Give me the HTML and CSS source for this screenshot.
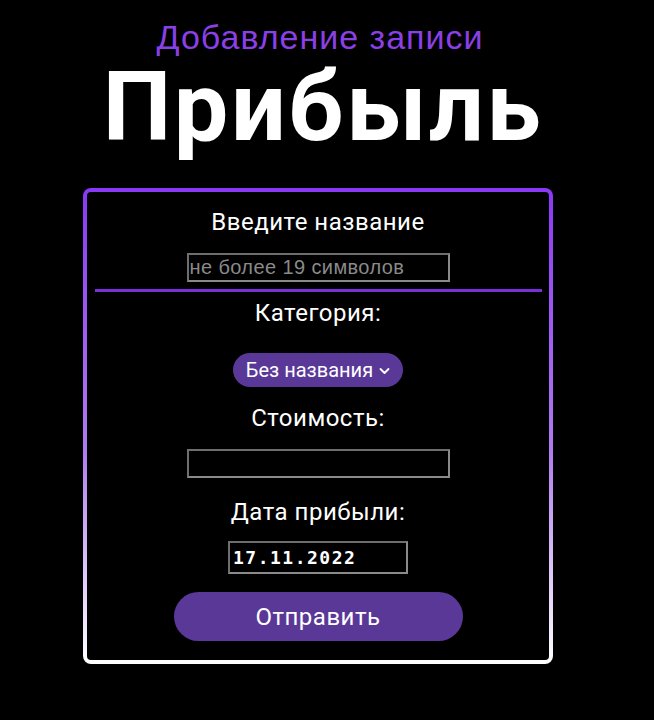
FILE: index.html
```html
<!DOCTYPE html>
<html lang="ru">
<head>
<meta charset="utf-8">
<link rel="stylesheet" href="styles.css">
</head>
<body>
<div class="page">
  <div class="subtitle">Добавление записи</div>
  <h1 class="title">Прибыль</h1>
  <div class="card-frame">
    <form class="card">
      <label class="label">Введите название</label>
      <input class="field field-name" type="text" placeholder="не более 19 символов">
      <div class="divider"></div>
      <label class="label label-cat">Категория:</label>
      <div class="select">Без названия
        <svg class="chev" width="11" height="8" viewBox="0 0 11 8"><path d="M1.5 2 L5.5 6 L9.5 2" fill="none" stroke="#fff" stroke-width="1.8" stroke-linecap="round" stroke-linejoin="round"/></svg>
      </div>
      <label class="label label-cost">Стоимость:</label>
      <input class="field field-cost" type="text">
      <label class="label label-date">Дата прибыли:</label>
      <div class="date">17.11.2022</div>
      <button class="submit" type="button">Отправить</button>
    </form>
  </div>
</div>
</body>
</html>
```
FILE: styles.css
```css
html, body {
  margin: 0;
  padding: 0;
  background: #000;
}
body {
  font-family: Roboto, "Noto Sans", sans-serif;
  color: #fff;
}
.page {
  width: 636px;
  display: flex;
  flex-direction: column;
  align-items: center;
}
.subtitle {
  margin-top: 17px;
  font-family: "Liberation Sans", Arial, sans-serif;
  font-size: 34px;
  line-height: 40px;
  color: #8a40e6;
  letter-spacing: 1px;
  margin-left: 4px;
}
.title {
  margin: 0 0 0 10px;
  font-weight: 700;
  font-size: 97px;
  line-height: 100px;
  letter-spacing: 2.5px;
}
.card-frame {
  margin-top: 31px;
  width: 470px;
  padding: 4px;
  box-sizing: border-box;
  border-radius: 8px;
  background: linear-gradient(180deg, #8a38f5 0%, #b07af0 55%, #ffffff 100%);
}
.card {
  background: #000;
  border-radius: 4px;
  display: flex;
  flex-direction: column;
  align-items: center;
  padding: 15px 0 19px;
}
.label {
  font-size: 24px;
  line-height: 30px;
  letter-spacing: 0.5px;
  color: #fff;
}
.field {
  width: 263px;
  height: 29px;
  box-sizing: border-box;
  background: #000;
  border: 2px solid #6e6e6e;
  border-right-color: #8a8a8a;
  border-bottom-color: #8a8a8a;
  color: #fff;
  font-family: "Liberation Sans", Arial, sans-serif;
  font-size: 20px;
  letter-spacing: 0.4px;
  padding: 0 1px;
  outline: none;
}
.field::placeholder {
  color: #8a8a8a;
}
.field-name {
  margin-top: 16px;
}
.divider {
  margin-top: 7px;
  width: 447px;
  height: 3px;
  background: #7a2fd8;
}
.label-cat {
  margin-top: 6px;
}
.select {
  margin-top: 25px;
  width: 170px;
  height: 34px;
  box-sizing: border-box;
  border-radius: 17px;
  background: #5a3898;
  display: flex;
  align-items: center;
  justify-content: center;
  gap: 6px;
  font-size: 20px;
  color: #fff;
}
.chev {
  margin-top: 1px;
}
.label-cost {
  margin-top: 16px;
}
.field-cost {
  margin-top: 16px;
}
.label-date {
  margin-top: 19px;
}
.date {
  margin-top: 14px;
  width: 180px;
  height: 33px;
  box-sizing: border-box;
  border: 2px solid #6e6e6e;
  border-right-color: #8a8a8a;
  border-bottom-color: #8a8a8a;
  font-family: "DejaVu Sans Mono", "Liberation Mono", monospace;
  font-weight: bold;
  font-size: 18px;
  line-height: 29px;
  padding-left: 3px;
  letter-spacing: 1.5px;
}
.submit {
  margin-top: 18px;
  width: 289px;
  height: 49px;
  border: none;
  border-radius: 25px;
  background: #5a3898;
  color: #fff;
  font-family: Roboto, "Noto Sans", sans-serif;
  font-size: 24px;
  letter-spacing: 0.5px;
}
```
